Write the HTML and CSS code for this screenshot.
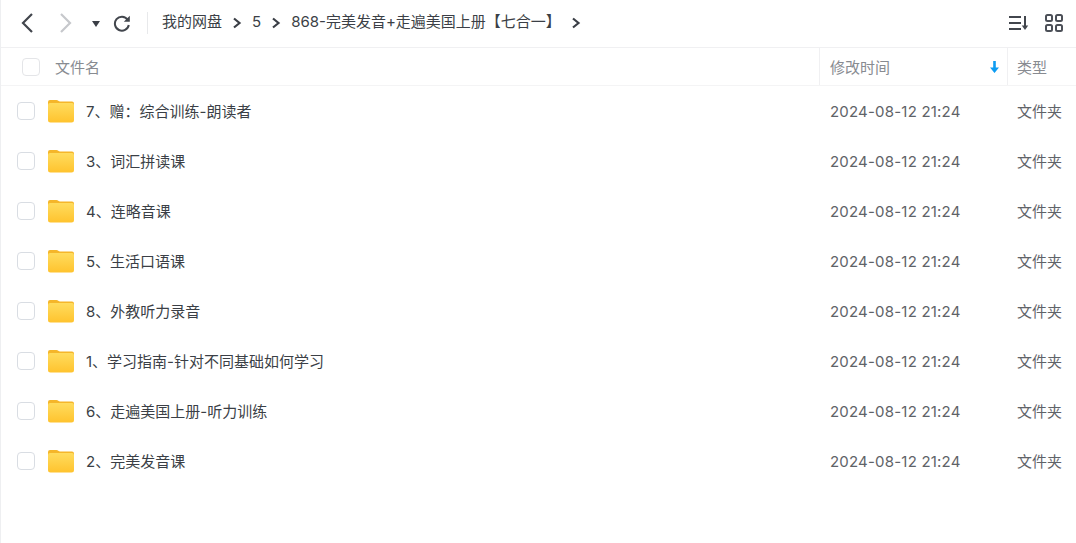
FILE: index.html
```html
<!DOCTYPE html>
<html lang="zh-CN">

<head>
    <meta charset="UTF-8">
    <title>我的网盘</title>
    <link rel="stylesheet" href="styles.css">
</head>

<body>
    <svg class="sprite" width="0" height="0">
        <defs>
            <linearGradient id="leaf" x1="0" y1="0" x2="0" y2="1">
                <stop offset="0" stop-color="#ffdc5e" />
                <stop offset="1" stop-color="#ffc32e" />
            </linearGradient>
        </defs>
        <symbol id="folder" viewBox="0 0 26 24">
            <path class="back-leaf" d="M0 3a2 2 0 0 1 2-2h6.500c1.500 0 2 1.500 3.500 1.500H24a2 2 0 0 1 2 2V12H0z" />
            <path class="front-leaf" d="M0 6a2 2 0 0 1 2-2h22a2 2 0 0 1 2 2v15a2.500 2.500 0 0 1-2.500 2.500h-21A2.500 2.500 0 0 1 0 21z" />
        </symbol>
    </svg>

    <div class="box">
        <div class="toolbar">
            <div class="nav">
                <svg class="ico back" width="16" height="22" viewBox="0 0 16 22"><path d="M13 2L4 11l9 9" /></svg>
                <svg class="ico forward" width="16" height="22" viewBox="0 0 16 22"><path d="M3 2l9 9-9 9" /></svg>
                <span class="drop"></span>
                <svg class="refresh" width="18" height="18" viewBox="0 0 18 18">
                    <path d="M14.600 5.600A7 7 0 1 0 15.800 11" />
                    <path class="tip" d="M16.800 1.800v6h-6z" />
                </svg>
            </div>
            <div class="crumbs">
                <span>我的网盘</span>
                <svg class="sep" width="10" height="12" viewBox="0 0 10 12"><path d="M2 1.500L7.500 6 2 10.500" /></svg>
                <span>5</span>
                <svg class="sep" width="10" height="12" viewBox="0 0 10 12"><path d="M2 1.500L7.500 6 2 10.500" /></svg>
                <span>868-完美发音+走遍美国上册【七合一】</span>
                <svg class="sep" width="10" height="12" viewBox="0 0 10 12"><path d="M2 1.500L7.500 6 2 10.500" /></svg>
            </div>
            <div class="tools">
                <svg class="sort" width="20" height="16" viewBox="0 0 20 16">
                    <path d="M0 2h12M0 8h12M0 14h12M16 1v12" />
                    <path class="tip" d="M12.800 10.500h6.400L16 15z" />
                </svg>
                <svg class="grid" width="18" height="18" viewBox="0 0 18 18">
                    <rect x="1" y="1" width="6" height="6" rx="1.500" />
                    <rect x="11" y="1" width="6" height="6" rx="1.500" />
                    <rect x="1" y="11" width="6" height="6" rx="1.500" />
                    <rect x="11" y="11" width="6" height="6" rx="1.500" />
                </svg>
            </div>
        </div>

        <div class="head">
            <div class="col-name">
                <span class="check head-check"></span>
                <span class="label">文件名</span>
            </div>
            <div class="col-time">
                <span class="label">修改时间</span>
                <svg class="arrow" width="9" height="12" viewBox="0 0 9 12">
                    <path d="M3.200 0h2.600v6.500H9L4.500 12 0 6.500h3.200z" />
                </svg>
            </div>
            <div class="col-type"><span class="label">类型</span></div>
        </div>

        <ul class="list">
            <li>
                <div class="col-name">
                    <span class="check"></span>
                    <svg class="folder" width="26" height="24"><use href="#folder" /></svg>
                    <span class="label title">7、赠：综合训练-朗读者</span>
                </div>
                <div class="col-time label">2024-08-12 21:24</div>
                <div class="col-type label">文件夹</div>
            </li>
            <li>
                <div class="col-name">
                    <span class="check"></span>
                    <svg class="folder" width="26" height="24"><use href="#folder" /></svg>
                    <span class="label title">3、词汇拼读课</span>
                </div>
                <div class="col-time label">2024-08-12 21:24</div>
                <div class="col-type label">文件夹</div>
            </li>
            <li>
                <div class="col-name">
                    <span class="check"></span>
                    <svg class="folder" width="26" height="24"><use href="#folder" /></svg>
                    <span class="label title">4、连略音课</span>
                </div>
                <div class="col-time label">2024-08-12 21:24</div>
                <div class="col-type label">文件夹</div>
            </li>
            <li>
                <div class="col-name">
                    <span class="check"></span>
                    <svg class="folder" width="26" height="24"><use href="#folder" /></svg>
                    <span class="label title">5、生活口语课</span>
                </div>
                <div class="col-time label">2024-08-12 21:24</div>
                <div class="col-type label">文件夹</div>
            </li>
            <li>
                <div class="col-name">
                    <span class="check"></span>
                    <svg class="folder" width="26" height="24"><use href="#folder" /></svg>
                    <span class="label title">8、外教听力录音</span>
                </div>
                <div class="col-time label">2024-08-12 21:24</div>
                <div class="col-type label">文件夹</div>
            </li>
            <li>
                <div class="col-name">
                    <span class="check"></span>
                    <svg class="folder" width="26" height="24"><use href="#folder" /></svg>
                    <span class="label title">1、学习指南-针对不同基础如何学习</span>
                </div>
                <div class="col-time label">2024-08-12 21:24</div>
                <div class="col-type label">文件夹</div>
            </li>
            <li>
                <div class="col-name">
                    <span class="check"></span>
                    <svg class="folder" width="26" height="24"><use href="#folder" /></svg>
                    <span class="label title">6、走遍美国上册-听力训练</span>
                </div>
                <div class="col-time label">2024-08-12 21:24</div>
                <div class="col-type label">文件夹</div>
            </li>
            <li>
                <div class="col-name">
                    <span class="check"></span>
                    <svg class="folder" width="26" height="24"><use href="#folder" /></svg>
                    <span class="label title">2、完美发音课</span>
                </div>
                <div class="col-time label">2024-08-12 21:24</div>
                <div class="col-type label">文件夹</div>
            </li>
        </ul>
    </div>
</body>

</html>
```

FILE: styles.css
```css
* {
    margin: 0;
    padding: 0;
    list-style: none;
    box-sizing: border-box;
}

body {
    background-color: #fff;
    font-family: Inter, "Noto Sans CJK SC", sans-serif;
    font-size: 15px;
    line-height: 20px;
    color: #3b3f46;
    overflow: hidden;
}

.sprite {
    display: block;
    height: 0;
}

.box {
    height: 543px;
    border-left: solid #eeeff1 1px;
}

.toolbar {
    display: flex;
    align-items: center;
    height: 48px;
    padding: 0 13px 2px 18px;
    border-bottom: solid #f0f0f2 1px;
}

.nav {
    display: flex;
    align-items: center;
    width: 129px;
    height: 22px;
    border-right: solid #e8e9eb 1px;
}

.ico path {
    fill: none;
    stroke: #42464d;
    stroke-width: 2.2;
}

.ico.forward {
    margin-left: 23px;
}

.ico.forward path {
    stroke: #c6c8cc;
}

.drop {
    width: 0;
    height: 0;
    margin: 2px 0 0 18px;
    border-top: 6px solid #3b3f46;
    border-left: 4px solid transparent;
    border-right: 4px solid transparent;
}

.refresh {
    margin-left: 13px;
}

.refresh path {
    fill: none;
    stroke: #42464d;
    stroke-width: 2;
}

.refresh .tip,
.sort .tip {
    fill: #42464d;
    stroke: none;
}

.crumbs {
    display: flex;
    align-items: center;
    flex: 1;
    gap: 10px;
    padding-left: 14px;
    padding-bottom: 2px;
    color: #3b3f46;
}

.sep {
    margin-top: 2px;
}

.sep path {
    fill: none;
    stroke: #3b3f46;
    stroke-width: 2.2;
}

.tools {
    display: flex;
    align-items: center;
    gap: 16px;
}

.sort path {
    fill: none;
    stroke: #42464d;
    stroke-width: 2;
}

.grid rect {
    fill: none;
    stroke: #4c5058;
    stroke-width: 2;
}

.head {
    display: flex;
    height: 38px;
    border-bottom: solid #f4f4f5 1px;
    color: #888b91;
}

.head > div {
    display: flex;
    align-items: center;
}

.head .col-time,
.head .col-type {
    border-left: solid #f0f0f2 1px;
}

.head .col-time {
    justify-content: space-between;
    padding-right: 8px;
}

.col-name {
    display: flex;
    align-items: center;
    width: 818px;
    padding-left: 16px;
}

.col-time {
    width: 188px;
    padding-left: 10px;
}

.col-type {
    flex: 1;
    padding-left: 9px;
}

/* text sits 1px lower than the icons beside it */
.label {
    padding-top: 2px;
}

.check {
    width: 18px;
    height: 18px;
    border: solid #d9dde3 1.500px;
    border-radius: 4px;
    background-color: #fff;
}

.head-check {
    margin: 0 15px 0 5px;
    border-color: #e4e5e8;
}

.arrow path {
    fill: #0d9cf2;
}

.list li {
    display: flex;
    align-items: center;
    height: 50px;
}

.folder {
    margin: 0 12px 0 13px;
}

.back-leaf {
    fill: #f5b62a;
}

.front-leaf {
    fill: url(#leaf);
}

.title {
    color: #3b3f46;
}

.list .col-time,
.list .col-type {
    color: #5f6368;
}

.list .col-time {
    border-left: solid transparent 1px;
    letter-spacing: 0.2px;
}

.list .col-type {
    padding-left: 10px;
}
```
